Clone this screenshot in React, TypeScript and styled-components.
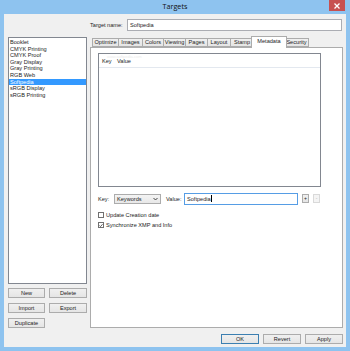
import React, { FC } from 'react';
import styled, { createGlobalStyle } from 'styled-components';

const TARGETS = [
  'Booklet',
  'CMYK Printing',
  'CMYK Proof',
  'Gray Display',
  'Gray Printing',
  'RGB Web',
  'Softpedia',
  'sRGB Display',
  'sRGB Printing',
];

const TABS = [
  { name: 'Optimize', width: 27 },
  { name: 'Images', width: 25 },
  { name: 'Colors', width: 22 },
  { name: 'Viewing', width: 23 },
  { name: 'Pages', width: 23 },
  { name: 'Layout', width: 24 },
  { name: 'Stamp', width: 24 },
  { name: 'Metadata', width: 36 },
  { name: 'Security', width: 25 },
];

const GlobalStyle = createGlobalStyle`
  html, body {
    margin: 0;
    padding: 0;
    background: #8ec3ef;
  }
  body {
    font-family: "Liberation Sans", Arial, sans-serif;
    color: #1c1c1c;
  }
`;

const App: FC = () => {
  return (
    <>
      <GlobalStyle />
      <Window>
        <TitleBar>
          <span />
          <Title>Targets</Title>
          <CloseButton>
            <svg width="6" height="6" viewBox="0 0 6 6">
              <path d="M0.5 0.5 L5.5 5.5 M5.5 0.5 L0.5 5.5" stroke="#fff" strokeWidth="1.3" />
            </svg>
          </CloseButton>
        </TitleBar>
        <Client>
          <NameRow>
            <Label>Target name:</Label>
            <TextInput>Softpedia</TextInput>
          </NameRow>

          <LeftColumn>
            <TargetList>
              {TARGETS.map((t) => (
                <TargetItem key={t} selected={t === 'Softpedia'}>
                  {t}
                </TargetItem>
              ))}
            </TargetList>
            <ButtonGrid>
              <Button>New</Button>
              <Button>Delete</Button>
              <Button>Import</Button>
              <Button>Export</Button>
              <Button>Duplicate</Button>
            </ButtonGrid>
          </LeftColumn>

          <RightColumn>
            <TabStrip>
              {TABS.map((tab) => (
                <Tab key={tab.name} w={tab.width} active={tab.name === 'Metadata'}>
                  {tab.name}
                </Tab>
              ))}
            </TabStrip>
            <TabPanel>
              <MetaList>
                <Watermark>www.softpedia.com</Watermark>
                <MetaHeader>
                  <HeaderCell w={15}>Key</HeaderCell>
                  <HeaderCell w={30}>Value</HeaderCell>
                </MetaHeader>
              </MetaList>
              <FormRow>
                <FormLabel w={16}>Key:</FormLabel>
                <Select>
                  <span>Keywords</span>
                  <svg width="5" height="4" viewBox="0 0 5 4">
                    <path d="M0.5 1 L2.5 3 L4.5 1" stroke="#333" strokeWidth="0.9" fill="none" />
                  </svg>
                </Select>
                <FormLabel w={18} style={{ marginLeft: 5 }}>
                  Value:
                </FormLabel>
                <ValueInput>
                  Softpedia<Caret />
                </ValueInput>
                <SmallButton>+</SmallButton>
                <SmallButton disabled>-</SmallButton>
              </FormRow>
              <CheckRow first>
                <CheckBox />
                <span>Update Creation date</span>
              </CheckRow>
              <CheckRow>
                <CheckBox>
                  <svg width="5" height="5" viewBox="0 0 5 5">
                    <path d="M0.6 2.6 L1.9 3.9 L4.4 0.9" stroke="#222" strokeWidth="0.9" fill="none" />
                  </svg>
                </CheckBox>
                <span>Synchronize XMP and Info</span>
              </CheckRow>
            </TabPanel>
          </RightColumn>

          <FooterRow>
            <Button primary>OK</Button>
            <Button>Revert</Button>
            <Button>Apply</Button>
          </FooterRow>
        </Client>
      </Window>
    </>
  );
};

const Window = styled.div`
  width: 350px;
  height: 351px;
  box-sizing: border-box;
  padding: 0 4px 4px 4px;
  background: #8ec3ef;
  display: flex;
  flex-direction: column;
`;

const TitleBar = styled.div`
  height: 14px;
  display: grid;
  grid-template-columns: 1fr auto 1fr;
  align-items: start;
`;

const Title = styled.div`
  font-family: "Open Sans", "Liberation Sans", sans-serif;
  font-size: 7.2px;
  line-height: 14px;
  color: #111;
  transform: translateY(-1px);
`;

const CloseButton = styled.div`
  justify-self: end;
  margin-right: 1px;
  width: 16px;
  height: 11px;
  background: #c75050;
  display: flex;
  align-items: center;
  justify-content: center;
`;

const Client = styled.div`
  flex: 1;
  background: #f0f0f0;
  box-sizing: border-box;
  padding: 5px 3px 4px 4px;
  display: grid;
  grid-template-columns: 79px 1fr;
  grid-template-rows: 12px 1fr 10px;
  column-gap: 3px;
  row-gap: 5px;
  font-size: 5.6px;
`;

const NameRow = styled.div`
  grid-column: 2;
  display: flex;
  align-items: center;
  padding-right: 1px;
`;

const Label = styled.span`
  width: 37px;
  flex: none;
`;

const TextInput = styled.div`
  flex: 1;
  height: 12px;
  box-sizing: border-box;
  border: 1px solid #abadb3;
  background: #fff;
  padding-left: 2px;
  line-height: 10px;
`;

const LeftColumn = styled.div`
  grid-column: 1;
  display: flex;
  flex-direction: column;
  padding-top: 1px;
`;

const TargetList = styled.div`
  flex: 1;
  background: #fff;
  border: 1px solid #828790;
  padding-top: 1px;
`;

const TargetItem = styled.div<{ selected?: boolean }>`
  height: 6.6px;
  line-height: 6.6px;
  padding-left: 1px;
  white-space: nowrap;
  background: ${(p) => (p.selected ? '#3399ff' : 'transparent')};
  color: ${(p) => (p.selected ? '#fff' : '#1c1c1c')};
`;

const ButtonGrid = styled.div`
  margin-top: 4px;
  display: grid;
  grid-template-columns: 37px 38px;
  column-gap: 4px;
  row-gap: 5px;
`;

const Button = styled.div<{ primary?: boolean }>`
  height: 10px;
  width: 100%;
  box-sizing: border-box;
  border: 1px solid ${(p) => (p.primary ? '#3c7fb1' : '#acacac')};
  background: linear-gradient(#f0f0f0, #e5e5e5);
  display: flex;
  align-items: center;
  justify-content: center;
  white-space: nowrap;
`;

const RightColumn = styled.div`
  grid-column: 2;
  display: flex;
  flex-direction: column;
`;

const TabStrip = styled.div`
  height: 11px;
  display: flex;
  align-items: flex-end;
  padding-left: 2px;
`;

const Tab = styled.div<{ w: number; active?: boolean }>`
  position: relative;
  width: ${(p) => p.w}px;
  height: ${(p) => (p.active ? 12 : 9)}px;
  box-sizing: border-box;
  margin-left: ${(p) => (p.active ? -3 : -1)}px;
  margin-right: ${(p) => (p.active ? -2 : 0)}px;
  margin-bottom: ${(p) => (p.active ? -1 : 0)}px;
  z-index: ${(p) => (p.active ? 2 : 1)};
  border: 1px solid #acacac;
  border-bottom: ${(p) => (p.active ? 'none' : '1px solid #acacac')};
  background: ${(p) => (p.active ? '#fff' : 'linear-gradient(#f0f0f0, #e5e5e5)')};
  text-align: center;
  line-height: ${(p) => (p.active ? 9 : 7)}px;
  white-space: nowrap;
  &:first-child {
    margin-left: 0;
  }
`;

const TabPanel = styled.div`
  flex: 1;
  background: #fff;
  border: 1px solid #acacac;
  padding: 5px 0 0 7px;
`;

const MetaList = styled.div`
  position: relative;
  width: 223px;
  height: 134px;
  box-sizing: border-box;
  border: 1px solid #828790;
  background: #fff;
`;

const Watermark = styled.div`
  position: absolute;
  left: 8px;
  top: 0px;
  font-size: 4px;
  color: #ececec;
`;

const MetaHeader = styled.div`
  height: 13px;
  display: flex;
  align-items: center;
  border-bottom: 1px solid #e3e8ef;
  padding-left: 3px;
`;

const HeaderCell = styled.span<{ w: number }>`
  width: ${(p) => p.w}px;
`;

const FormRow = styled.div`
  margin-top: 5px;
  height: 13px;
  display: flex;
  align-items: center;
`;

const FormLabel = styled.span<{ w: number }>`
  width: ${(p) => p.w}px;
  flex: none;
`;

const Select = styled.div`
  width: 47px;
  height: 10px;
  box-sizing: border-box;
  border: 1px solid #acacac;
  background: linear-gradient(#f4f4f4, #e8e8e8);
  display: flex;
  align-items: center;
  justify-content: space-between;
  padding: 0 2px;
`;

const ValueInput = styled.div`
  width: 114px;
  height: 12px;
  box-sizing: border-box;
  border: 1px solid #569de5;
  background: #fff;
  padding-left: 2px;
  display: flex;
  align-items: center;
`;

const Caret = styled.span`
  width: 1px;
  height: 7px;
  background: #000;
`;

const SmallButton = styled.div<{ disabled?: boolean }>`
  margin-left: 4px;
  width: 7px;
  height: 9px;
  box-sizing: border-box;
  border: 1px solid ${(p) => (p.disabled ? '#d9d9d9' : '#acacac')};
  background: ${(p) => (p.disabled ? '#f4f4f4' : 'linear-gradient(#f0f0f0, #e5e5e5)')};
  color: ${(p) => (p.disabled ? '#b0b0b0' : '#222')};
  display: flex;
  align-items: center;
  justify-content: center;
  font-size: 5px;
  line-height: 1;
`;

const CheckRow = styled.div<{ first?: boolean }>`
  height: 10px;
  display: flex;
  align-items: center;
  gap: 2px;
  margin-top: ${(p) => (p.first ? 5 : 0)}px;
`;

const CheckBox = styled.div`
  width: 6px;
  height: 6px;
  box-sizing: border-box;
  border: 1px solid #707070;
  background: #fff;
  display: flex;
  align-items: center;
  justify-content: center;
`;

const FooterRow = styled.div`
  grid-column: 1 / span 2;
  display: flex;
  justify-content: flex-end;
  gap: 4px;
  margin-top: 1px;
  & > div {
    width: 38px;
  }
`;

export default App;
